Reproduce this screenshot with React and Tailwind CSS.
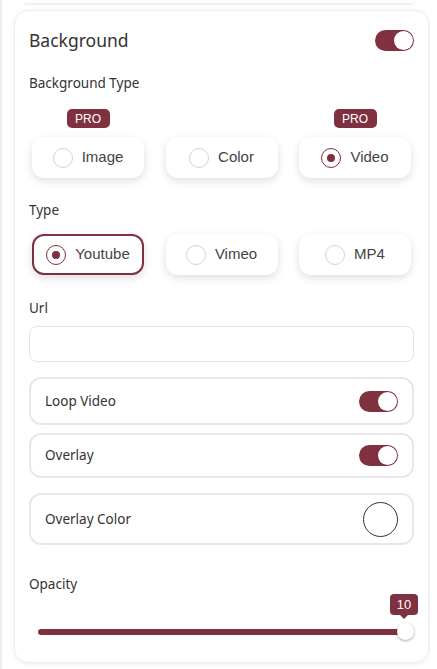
import React, {useState} from "react";

const label = "font-['Noto_Sans','Open_Sans',sans-serif] text-[#333]";
const opt = "font-['Liberation_Sans',Arial,sans-serif] text-[15px] text-[#444]";

const Toggle = ({on = true}) => (
    <div className={`w-[39px] h-[21px] rounded-full flex items-center p-[1px] ${on ? "bg-[#80313f] justify-end" : "bg-gray-300 justify-start"}`}>
        <div className="w-[19px] h-[19px] rounded-full bg-white"></div>
    </div>
);

const Radio = ({checked}) => (
    <div className={`w-[20px] h-[20px] rounded-full flex items-center justify-center ${checked ? "border-[1.5px] border-[#80313f]" : "border border-[#d4d4d4]"}`}>
        {checked && <div className="w-[8px] h-[8px] rounded-full bg-[#80313f]"></div>}
    </div>
);

const Option = ({text, checked, outlined}) => (
    <div className={`w-[112px] h-[41px] rounded-[12px] bg-white flex items-center justify-center gap-[9px] shadow-[0_3px_8px_rgba(0,0,0,0.13)] ${outlined ? "border-2 border-[#80313f]" : ""}`}>
        <Radio checked={checked} />
        <span className={opt}>{text}</span>
    </div>
);

const Pro = () => (
    <div className="w-[43px] h-[19px] rounded-[5px] bg-[#80313f] text-white text-[12px] flex items-center justify-center font-['Liberation_Sans',Arial,sans-serif]">PRO</div>
);

const Row = ({children, h}) => (
    <div className={`${h} border-2 border-[#e8e8e8] rounded-[12px] flex items-center justify-between pl-[14px] pr-[14px]`}>
        {children}
    </div>
);

export default function App() {
    const [bgType] = useState("video");
    const [type] = useState("youtube");

    return (
        <div className="w-[437px] h-[669px] bg-white border-l-2 border-[#ececec] overflow-hidden">
            <div className="mx-[22px] h-[3px] rounded-b-[12px] bg-white shadow-[0_1px_3px_rgba(0,0,0,0.12)]"></div>
            <div className="ml-[12px] mt-[7px] w-[415px] h-[653px] rounded-[14px] border border-[#ededed] shadow-[0_1px_4px_rgba(0,0,0,0.08)] pt-[18px] px-[14px]">
                <div className="flex items-center justify-between h-[22px]">
                    <h1 className={`${label} text-[17.5px]`}>Background</h1>
                    <Toggle />
                </div>

                <div className={`${label} text-[13.5px] mt-[23px] leading-[18px]`}>Background Type</div>
                <div className="flex justify-between px-[3px] mt-[17px]">
                    <div className="flex flex-col items-center gap-[9px]">
                        <Pro />
                        <Option text="Image" checked={bgType === "image"} />
                    </div>
                    <div className="flex flex-col items-center gap-[9px]">
                        <div className="h-[19px]"></div>
                        <Option text="Color" checked={bgType === "color"} />
                    </div>
                    <div className="flex flex-col items-center gap-[9px]">
                        <Pro />
                        <Option text="Video" checked={bgType === "video"} />
                    </div>
                </div>

                <div className={`${label} text-[13.5px] mt-[23px] leading-[18px]`}>Type</div>
                <div className="flex justify-between px-[3px] mt-[15px]">
                    <Option text="Youtube" checked={type === "youtube"} outlined />
                    <Option text="Vimeo" checked={type === "vimeo"} />
                    <Option text="MP4" checked={type === "mp4"} />
                </div>

                <div className={`${label} text-[13.5px] mt-[24px] leading-[18px]`}>Url</div>
                <input className="mt-[9px] w-full h-[36px] rounded-[8px] border border-[#e3e3e3] outline-none px-3" />

                <div className="mt-[15px] flex flex-col">
                    <Row h="h-[48px]">
                        <span className={`${label} text-[13.5px]`}>Loop Video</span>
                        <Toggle />
                    </Row>
                    <div className="mt-[8px]">
                        <Row h="h-[45px]">
                            <span className={`${label} text-[13.5px]`}>Overlay</span>
                            <Toggle />
                        </Row>
                    </div>
                    <div className="mt-[15px]">
                        <Row h="h-[52px]">
                            <span className={`${label} text-[13.5px]`}>Overlay Color</span>
                            <div className="w-[35px] h-[35px] rounded-full border border-[#333] bg-white"></div>
                        </Row>
                    </div>
                </div>

                <div className={`${label} text-[13.5px] mt-[30px] leading-[18px]`}>Opacity</div>
                <div className="mt-[1px] relative h-[46px] pl-[10px] pr-[1px]">
                    <div className="absolute right-[-4px] top-0 flex flex-col items-center">
                        <div className="w-[28px] h-[21px] rounded-[4px] bg-[#80313f] text-white text-[13px] flex items-center justify-center font-['Liberation_Sans',Arial,sans-serif]">10</div>
                        <div className="w-0 h-0 border-l-[4px] border-r-[4px] border-t-[4px] border-l-transparent border-r-transparent border-t-[#80313f]"></div>
                    </div>
                    <div className="absolute left-[9px] right-[1px] top-[35px] h-[6px] rounded-full bg-[#80313f]"></div>
                    <div className="absolute right-[0px] top-[29px] w-[17px] h-[17px] rounded-full bg-white shadow-[0_1px_3px_rgba(0,0,0,0.35)]"></div>
                </div>
            </div>
        </div>
    );
}
